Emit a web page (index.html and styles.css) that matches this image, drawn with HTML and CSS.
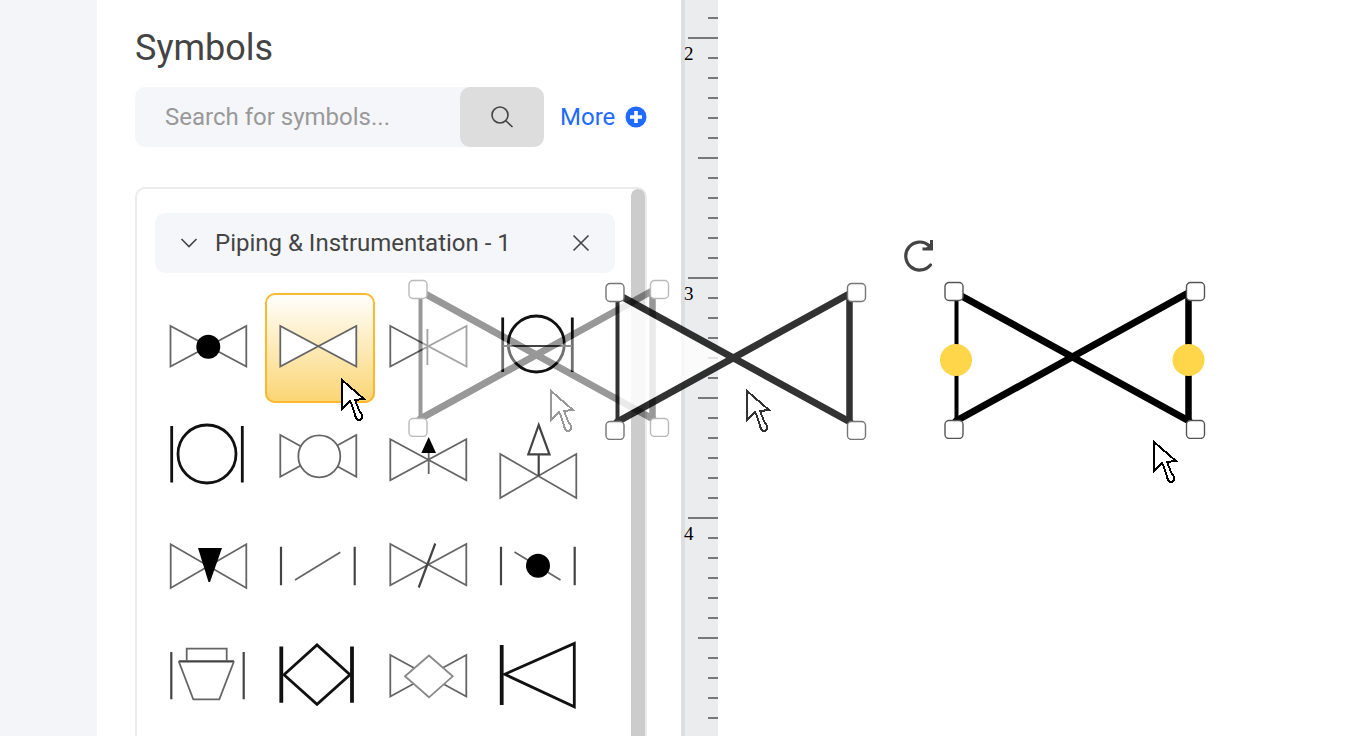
FILE: index.html
```html
<!doctype html>
<html lang="en">
<head>
<meta charset="utf-8">
<title>Symbols</title>
<link rel="stylesheet" href="styles.css">
</head>
<body>

<svg class="defs" aria-hidden="true">
	<symbol id="valve" viewBox="0 0 262 158">
		<path d="M12 12L127 75L12 140Z M244 12L127 75L245 140Z" fill="#fff"/>
		<path d="M12.5 12V140" stroke="#000" stroke-width="4"/>
		<path d="M244.5 12V140" stroke="#000" stroke-width="6.500"/>
		<path d="M12 12L245 140M12 140L244 12" stroke="#000" stroke-width="7" stroke-linecap="round"/>
		<g fill="#fff" stroke="#555" stroke-width="1.4">
			<rect x="1" y="1.500" width="18" height="18" rx="4"/>
			<rect x="242.500" y="1.500" width="18" height="18" rx="4"/>
			<rect x="1" y="139.500" width="18" height="18" rx="4"/>
			<rect x="242.500" y="139.500" width="18" height="18" rx="4"/>
		</g>
	</symbol>
	<symbol id="arrow" viewBox="0 0 26 44">
		<path d="M1 2V31L9 23L11 27L15 40L17 42H19L21 40V37L18 32L14 22L23 21Z" fill="#fff" stroke="#000" stroke-width="2" shape-rendering="crispEdges"/>
	</symbol>
</svg>

<div id="app">
	<div class="rail"></div>

	<div class="panel">
		<h1>Symbols</h1>
		<div class="toolbar">
			<form class="search">
				<input type="text" placeholder="Search for symbols..." aria-label="Search for symbols">
				<button type="button" aria-label="Search">
					<svg width="24" height="24" viewBox="0 0 24 24"><circle cx="10" cy="10" r="8" /><path d="M15.5 15.5L22.500 22"/></svg>
				</button>
			</form>
			<a class="more" href="#">More
				<svg width="22" height="22" viewBox="0 0 22 22"><circle cx="11" cy="11" r="10.500" fill="#1f6bff"/><path d="M11 5V17M5 11H17" stroke="#fff" stroke-width="3.600"/></svg>
			</a>
		</div>

		<div class="library">
			<div class="content">
				<div class="group">
					<button class="toggle" type="button">
						<svg width="18" height="12" viewBox="0 0 18 12"><path d="M1.500 2L9 9.500L16.500 2"/></svg>
						Piping &amp; Instrumentation - 1
					</button>
					<button class="close" type="button" aria-label="Close">
						<svg width="18" height="18" viewBox="0 0 18 18"><path d="M1.500 1.500L16.500 16.500M16.500 1.500L1.500 16.500"/></svg>
					</button>
				</div>
				<div class="grid">
					<button type="button" aria-label="Globe valve"><svg viewBox="0 0 110 110"><path d="M15.500 33V73.500L91.300 33V73.500Z"/><circle class="solid" cx="53.300" cy="53.700" r="12"/></svg></button>
					<button type="button" class="selected" aria-label="Gate valve"><svg viewBox="0 0 110 110"><path class="fill" d="M15.300 33V73.500L91.300 33V73.500Z"/></svg></button>
					<button type="button" aria-label="Needle valve"><svg viewBox="0 0 110 110"><path d="M15.300 33V73.500L91.500 33V73.500ZM52.400 36V72"/></svg></button>
					<button type="button" aria-label="Ball valve"><svg viewBox="0 0 110 110"><path class="bold" d="M17.700 24.500V79M87.300 24.500V79"/><circle class="bold" cx="51.300" cy="51" r="28"/><path class="mid" d="M18 53H87"/></svg></button>

					<button type="button" aria-label="Rotary valve"><svg viewBox="0 0 110 110"><path class="bold" d="M16.700 23V79.500M87.300 23V79.500"/><circle class="bold" cx="52" cy="51" r="29"/></svg></button>
					<button type="button" aria-label="Globe body"><svg viewBox="0 0 110 110"><path d="M15.300 32V73.700L91.300 32V73.700Z"/><circle class="fill" cx="54.300" cy="53.300" r="21"/></svg></button>
					<button type="button" aria-label="Spring valve"><svg viewBox="0 0 110 110"><path d="M15.300 36.300V77.300L91.300 36.300V77.300ZM53.700 48V71"/><path class="solid" d="M53.700 34L61 50H46.300Z"/></svg></button>
					<button type="button" aria-label="Relief valve"><svg viewBox="0 0 110 110"><path d="M15.300 51V95L91.300 51V95Z"/><path class="mid" d="M53.700 22L64.500 51.300H43.300ZM53.700 51V73"/></svg></button>

					<button type="button" aria-label="Plug valve"><svg viewBox="0 0 110 110"><path d="M15.700 31.300V75L91.300 31.300V75Z"/><path class="solid" d="M43 35H67L55 69H53.500Z"/></svg></button>
					<button type="button" aria-label="Butterfly valve"><svg viewBox="0 0 110 110"><path class="mid" d="M16 33.700V72.300M89.700 33.700V72.300"/><path d="M30 67L75.300 39.300"/></svg></button>
					<button type="button" aria-label="Gauge valve"><svg viewBox="0 0 110 110"><path d="M15.300 31V72.300L91.300 31V72.300Z"/><path class="mid" d="M60.300 30.500L43.700 74.500"/></svg></button>
					<button type="button" aria-label="Butterfly valve closed"><svg viewBox="0 0 110 110"><path class="mid" d="M16 33.700V72.300M89.700 33.700V72.300"/><path d="M29.500 39L75.500 67"/><circle class="solid" cx="53" cy="52.700" r="12"/></svg></button>

					<button type="button" aria-label="Hopper"><svg viewBox="0 0 110 110"><path class="mid" d="M16.300 29V76.300M88.700 29V76.300M23.700 38.300H79"/><path d="M31.700 38V25.700H71.700V38M23.700 38.300L38.300 76.300H64.300L79 38.300"/></svg></button>
					<button type="button" aria-label="Diamond valve"><svg viewBox="0 0 110 110"><path class="heavy" d="M16.300 23.500V79.700M87 23.500V79.700"/><path class="bold" d="M19 51.700L52 22L85 51.700L52 81.300Z"/></svg></button>
					<button type="button" aria-label="Diamond body"><svg viewBox="0 0 110 110"><path d="M15.300 32V73.500L91.300 32V73.500Z"/><path class="fill light" d="M30 53.300L54 32.500L77.700 53.300L54 74.300Z"/></svg></button>
					<button type="button" aria-label="Check valve"><svg viewBox="0 0 110 110"><path class="heavy" d="M16.700 22V82"/><path class="bold" d="M19.700 51.300L89.300 20.500V83.700Z"/></svg></button>
				</div>
			</div>
			<div class="scrollbar"></div>
		</div>
	</div>

	<ol class="ruler">
		<li></li>
		<li>2</li>
		<li>3</li>
		<li>4</li>
	</ol>

	<div class="canvas"></div>

	<!-- shape being dragged from the library to the page -->
	<svg class="drag start"><use href="#valve"/></svg>
	<svg class="drag middle"><use href="#valve"/></svg>
	<svg class="drag end"><use href="#valve"/><circle cx="12" cy="79" r="16"/><circle cx="244.500" cy="79" r="16"/></svg>
	<svg class="rotate" viewBox="0 0 32 34"><path d="M28.500 26A14 14 0 1 1 27 6.500" stroke="#444" stroke-width="3.200" stroke-linecap="round" fill="none"/><path d="M29.500 1V10H20.500" stroke="#444" stroke-width="3" fill="none"/><path d="M29 4V10H23Z" fill="#444"/></svg>

	<svg class="pointer p1"><use href="#arrow"/></svg>
	<svg class="pointer p2"><use href="#arrow"/></svg>
	<svg class="pointer p3"><use href="#arrow"/></svg>
	<svg class="pointer p4"><use href="#arrow"/></svg>
</div>

</body>
</html>
```
FILE: styles.css
```css
* {
	box-sizing: border-box;
}
body {
	margin: 0;
	font-family: Roboto, sans-serif;
	font-size: 24px;
	color: #444;
	background: #fff;
}
button {
	font: inherit;
	color: inherit;
	border: 0;
	padding: 0;
	background: none;
}
.defs {
	position: absolute;
	width: 0;
	height: 0;
}

#app {
	position: relative;
	display: flex;
	height: 100vh;
	overflow: hidden;
}
.rail {
	flex: 0 0 97px;
	background: #f4f5f8;
}
.panel {
	flex: 0 0 584px;
	min-width: 0;
	display: flex;
	flex-direction: column;
	padding: 24px 34px 0 38px;
}
h1 {
	margin: 0 0 15px;
	font-size: 36px;
	line-height: 48px;
	font-weight: 400;
}

.toolbar {
	display: flex;
	align-items: center;
	gap: 16px;
	margin-bottom: 40px;
}
.search {
	display: flex;
	flex: none;
	width: 409px;
	height: 60px;
	border-radius: 10px;
	background: #f5f6f9;
}
.search input {
	flex: 1;
	min-width: 0;
	padding: 0 0 0 30px;
	border: 0;
	background: none;
	font: inherit;
}
.search input::placeholder {
	color: #999;
}
.search button {
	width: 84px;
	border-radius: 10px;
	background: #ddd;
}
.search svg, .group svg {
	fill: none;
	stroke: #444;
	stroke-width: 1.6;
}
.search svg {
	display: block;
	margin: 0 auto;
}
.more {
	display: flex;
	align-items: center;
	gap: 10px;
	color: #1f6bff;
	text-decoration: none;
}

.library {
	flex: 1;
	min-height: 0;
	display: flex;
	border: 2px solid #ebebeb;
	border-bottom: 0;
	border-radius: 10px 10px 0 0;
}
.content {
	flex: 1;
	padding: 24px 16px 0 18px;
}
.scrollbar {
	width: 14px;
	border-radius: 7px 7px 0 0;
	background: #ccc;
}
.group {
	display: flex;
	justify-content: space-between;
	height: 60px;
	margin-bottom: 20px;
	padding: 0 25px;
	border-radius: 10px;
	background: #f5f6f9;
}
.toggle {
	display: flex;
	align-items: center;
	gap: 17px;
}
.close svg {
	display: block;
}

.grid {
	display: grid;
	grid-template-columns: repeat(4, 110px);
	grid-auto-rows: 110px;
}
.grid button {
	border-radius: 10px;
}
.grid svg {
	display: block;
	width: 110px;
	height: 110px;
	fill: none;
	stroke: #666;
	stroke-width: 1.8;
}
.grid .selected {
	background: linear-gradient(#fff, #fbd572);
	box-shadow: inset 0 0 0 2px #fdb92e;
}
.grid .fill {
	fill: #fff;
}
.grid .light {
	stroke: #888;
}
.grid .solid {
	fill: #000;
	stroke: none;
}
.grid .mid {
	stroke: #444;
	stroke-width: 2.2;
}
.grid .bold {
	stroke: #111;
	stroke-width: 2.8;
}
.grid .heavy {
	stroke: #111;
	stroke-width: 3.8;
}

.ruler {
	flex: 0 0 37px;
	margin: 0;
	padding: 0;
	border-left: 4px solid #dedee0;
	background: #ebecee;
	list-style: none;
	font-family: "Liberation Serif", serif;
	font-size: 19px;
	line-height: 22px;
	color: #000;
}
.ruler li {
	height: 240px;
	padding-top: 6px;
	text-indent: -1px;
	background:
		linear-gradient(#77787a, #77787a) right top / 30px 2px no-repeat,
		linear-gradient(#77787a, #77787a) right 120px / 20px 2px no-repeat,
		linear-gradient(#77787a 2px, transparent 2px) right top / 10px 20px repeat-y;
}
/* end of the section scrolled off the top */
.ruler li:first-child {
	height: 37px;
	background: linear-gradient(#77787a 2px, transparent 2px) right bottom / 10px 20px repeat-y;
}
.canvas {
	flex: 1;
	background: #fff;
}

.drag {
	position: absolute;
	width: 262px;
	height: 158px;
	overflow: visible;
}
.drag circle {
	fill: #ffd54a;
}
.start {
	left: 408px;
	top: 279px;
	opacity: .4;
}
.middle {
	left: 605px;
	top: 282px;
	opacity: .8;
}
.end {
	left: 944px;
	top: 281px;
}
.rotate {
	position: absolute;
	left: 902px;
	top: 239px;
	width: 32px;
	height: 34px;
}
.pointer {
	position: absolute;
	width: 26px;
	height: 44px;
}
.p1 {
	left: 341px;
	top: 378px;
}
.p2 {
	left: 550px;
	top: 389px;
	opacity: .4;
}
.p3 {
	left: 746px;
	top: 389px;
	opacity: .8;
}
.p4 {
	left: 1153px;
	top: 440px;
}
```
